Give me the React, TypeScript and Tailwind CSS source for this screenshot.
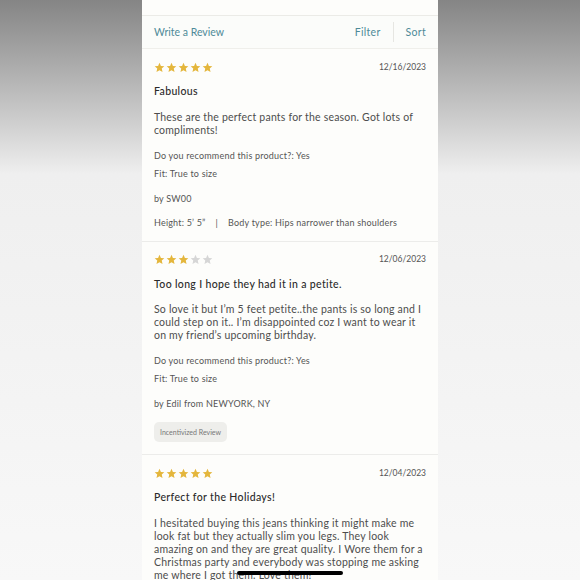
import React from "react";

type Review = {
  rating: number;
  date: string;
  title: string;
  body: string;
  recommend?: string;
  fit?: string;
  by?: string;
  meta?: string;
  badge?: string;
};

const reviews: Review[] = [
  {
    rating: 5,
    date: "12/16/2023",
    title: "Fabulous",
    body: "These are the perfect pants for the season. Got lots of compliments!",
    recommend: "Yes",
    fit: "True to size",
    by: "by SW00",
    meta: "Height: 5’ 5”",
  },
  {
    rating: 3,
    date: "12/06/2023",
    title: "Too long I hope they had it in a petite.",
    body: "So love it but I’m 5 feet petite..the pants is so long and I could step on it.. I’m disappointed coz I want to wear it on my friend’s upcoming birthday.",
    recommend: "Yes",
    fit: "True to size",
    by: "by Edil from NEWYORK, NY",
    badge: "Incentivized Review",
  },
  {
    rating: 5,
    date: "12/04/2023",
    title: "Perfect for the Holidays!",
    body: "I hesitated buying this jeans thinking it might make me look fat but they actually slim you legs. They look amazing on and they are great quality. I Wore them for a Christmas party and everybody was stopping me asking me where I got them. Love them!",
  },
];

function Star({ on }: { on: boolean }) {
  return (
    <svg width="11" height="11" viewBox="0 0 24 24" className="shrink-0">
      <path
        d="M12 1.8l3.1 6.9 7.4.7-5.6 5 1.7 7.4L12 17.9l-6.6 3.9 1.7-7.4-5.6-5 7.4-.7z"
        fill={on ? "#e4b63c" : "#d6d6d6"}
      />
    </svg>
  );
}

function ReviewCard({ r }: { r: Review }) {
  return (
    <div className="border-b border-[#ececea] px-3 pt-3 pb-3">
      <div className="flex items-center justify-between h-3">
        <div className="flex gap-[1px]">
          {[1, 2, 3, 4, 5].map((i) => (
            <Star key={i} on={i <= r.rating} />
          ))}
        </div>
        <span className="text-[8.5px] text-[#555]">{r.date}</span>
      </div>
      <p className="mt-[11px] text-[10.5px] leading-[14px] font-medium text-[#2a2a2a] tracking-[0.35px]">{r.title}</p>
      <p className="mt-[12.5px] text-[10.5px] leading-[13px] text-[#4d4d4d] tracking-[0.2px]">{r.body}</p>
      {r.recommend && (
        <p className="mt-[13px] text-[9px] leading-3 text-[#555] tracking-[0.2px]">
          Do you recommend this product?: {r.recommend}
        </p>
      )}
      {r.fit && (
        <p className="mt-[6px] text-[9px] leading-3 text-[#555] tracking-[0.2px]">Fit: {r.fit}</p>
      )}
      {r.by && (
        <p className="mt-[13px] text-[9px] leading-3 text-[#555] tracking-[0.2px]">{r.by}</p>
      )}
      {r.meta && (
        <p className="mt-3 text-[9px] leading-3 text-[#555] tracking-[0.2px] flex gap-[10px]">
          <span>{r.meta}</span>
          <span>|</span>
          <span>Body type: Hips narrower than shoulders</span>
        </p>
      )}
      {r.badge && (
        <div className="mt-3 inline-flex items-center h-5 px-[6px] rounded-[5px] bg-[#eeeeeb] text-[7px] text-[#777]">
          {r.badge}
        </div>
      )}
    </div>
  );
}

export default function App() {
  return (
    <div
      className="relative w-[580px] h-[580px] overflow-hidden flex justify-center bg-linear-to-b from-[#858585] via-[#efefef] via-[30%] to-[#f8f8f8]"
      style={{ fontFamily: "Lato, 'Noto Sans', sans-serif" }}
    >
      <div className="w-[296px] h-full bg-[#fdfdfb] flex flex-col">
        {/* header, scrolled out of view */}
        <div className="h-4 border-b border-[#ebebe7] shrink-0" />

        {/* toolbar */}
        <div className="h-[33px] px-3 flex items-center border-b border-[#efefeb] shrink-0 bg-[#fbfcfa] text-[10.5px] leading-[14px] text-[#4e8a98]">
          <span>Write a Review</span>
          <span className="ml-auto tracking-[0.3px]">Filter</span>
          <span className="mx-3 w-px h-5 bg-[#e6e6e2]" />
          <span className="tracking-[0.3px]">Sort</span>
        </div>

        {reviews.map((r) => (
          <ReviewCard key={r.date} r={r} />
        ))}
      </div>

      {/* home indicator */}
      <div className="absolute left-[237px] top-[571px] w-[106px] h-[4px] rounded-full bg-black" />
    </div>
  );
}
